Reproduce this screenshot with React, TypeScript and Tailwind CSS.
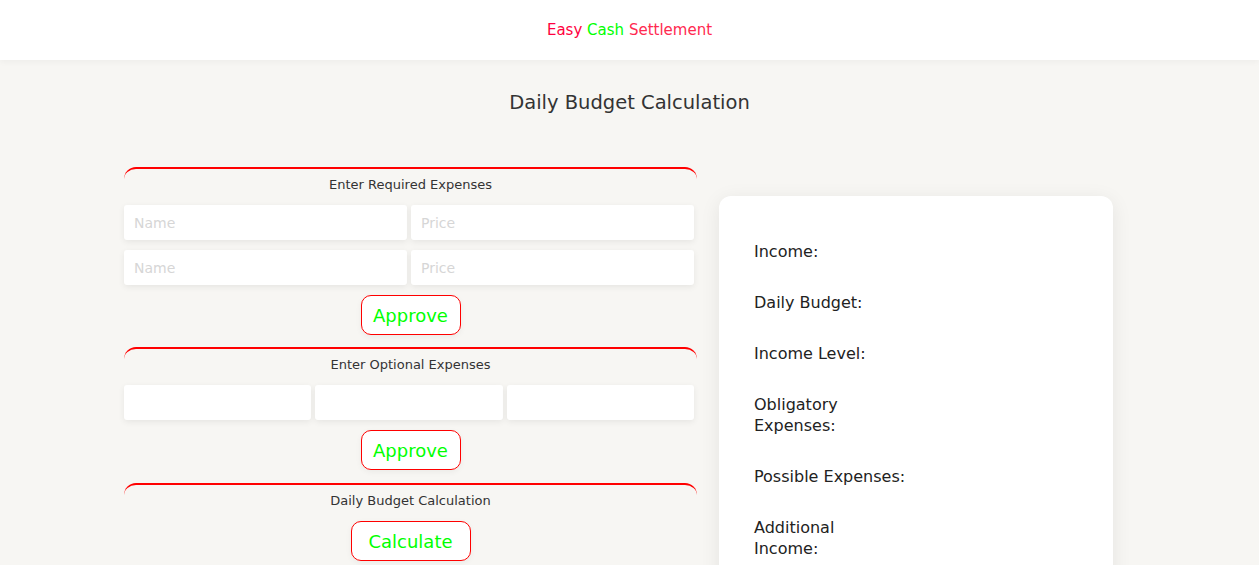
import React from "react";

const font = { fontFamily: '"DejaVu Sans", "Liberation Sans", sans-serif' };

// each label split into the lines it shows in the narrow label column
const labels = [
  ["Income:"],
  ["Daily Budget:"],
  ["Income Level:"],
  ["Obligatory", "Expenses:"],
  ["Possible Expenses:"],
  ["Additional", "Income:"],
];

function Section({ title, children, tight }: { title: string; children: React.ReactNode; tight?: boolean }) {
  return (
    <div className={`border-t-2 border-[#ff0000] rounded-t-[12px] pt-[6px] ${tight ? "pb-[13px]" : "pb-[12px]"}`}>
      <div className="text-center text-[13px] leading-[20px] text-[#333] mb-[10px]">{title}</div>
      {children}
    </div>
  );
}

function Field({ placeholder }: { placeholder?: string }) {
  return (
    <input
      placeholder={placeholder}
      className="h-[35px] w-full min-w-0 bg-white rounded-[3px] px-[10px] text-[14px] text-[#333] placeholder:text-[#d6d6d6] shadow-[0_2px_6px_rgba(0,0,0,0.07)] outline-none"
    />
  );
}

function OutlineButton({ label, width }: { label: string; width: string }) {
  return (
    <div className="flex justify-center">
      <button
        className={`${width} h-[40px] bg-white border border-[#ff0000] rounded-[10px] text-[18px] text-[#00ff00] shadow-[0_2px_6px_rgba(0,0,0,0.05)]`}
      >
        {label}
      </button>
    </div>
  );
}

export default function App() {
  return (
    <div className="min-h-screen bg-[#f7f6f3]" style={font}>
      {/* Header */}
      <header className="h-[60px] bg-white flex items-center justify-center shadow-[0_2px_6px_rgba(0,0,0,0.04)] relative">
        <h1 className="text-[15px] leading-none">
          <span className="text-[#ff0040]">Easy</span>{" "}
          <span className="text-[#00ff00]">Cash</span>{" "}
          <span className="text-[#ff2a50]">Settlement</span>
        </h1>
      </header>

      <h2 className="text-center text-[19.5px] leading-[24px] text-[#333] pt-[31px]">Daily Budget Calculation</h2>

      <div className="w-[989px] ml-[124px] mt-[52px] flex gap-[22px] items-start">
        {/* Left: forms */}
        <div className="w-[573px]">
          <Section title="Enter Required Expenses">
            <div className="flex flex-col gap-[10px] pr-[3px]">
              <div className="grid grid-cols-2 gap-[4px]">
                <Field placeholder="Name" />
                <Field placeholder="Price" />
              </div>
              <div className="grid grid-cols-2 gap-[4px]">
                <Field placeholder="Name" />
                <Field placeholder="Price" />
              </div>
            </div>
            <div className="mt-[10px]">
              <OutlineButton label="Approve" width="w-[100px]" />
            </div>
          </Section>

          <Section title="Enter Optional Expenses" tight>
            <div className="grid grid-cols-3 gap-[4px] pr-[3px]">
              <Field />
              <Field />
              <Field />
            </div>
            <div className="mt-[10px]">
              <OutlineButton label="Approve" width="w-[100px]" />
            </div>
          </Section>

          <Section title="Daily Budget Calculation">
            <OutlineButton label="Calculate" width="w-[120px]" />
          </Section>
        </div>

        {/* Right: results card */}
        <div className="w-[394px] mt-[29px] bg-white rounded-[12px] shadow-[0_4px_20px_rgba(0,0,0,0.08)] pt-[45px] px-[35px] pb-[40px]">
          <div className="flex flex-col gap-[30px]">
            {labels.map((lines) => (
              <div key={lines.join(" ")} className="text-[16px] leading-[21px] text-[#222]">
                {lines.map((ln) => (
                  <div key={ln}>{ln}</div>
                ))}
              </div>
            ))}
          </div>
        </div>
      </div>
    </div>
  );
}
